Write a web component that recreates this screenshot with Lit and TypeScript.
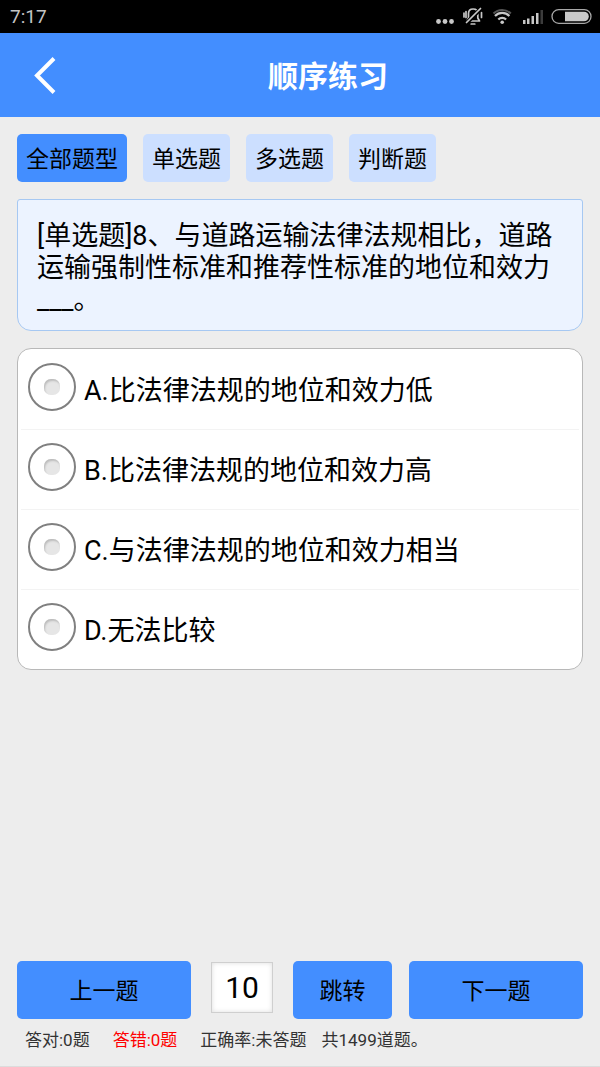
import { LitElement, html, css } from "lit";
import { customElement, state } from "lit/decorators.js";

@customElement("status-bar")
class StatusBar extends LitElement {
  static styles = css`
    :host {
      display: flex;
      align-items: center;
      justify-content: space-between;
      height: 33px;
      padding: 0 8px 0 10px;
      background: #000;
      color: #c4c4c4;
      font-size: 19px;
      line-height: 33px;
    }
    .icons {
      display: block;
    }
  `;

  render() {
    return html`
      <span>7:17</span>
      <svg class="icons" width="160" height="33" viewBox="432 0 160 33" fill="none" stroke="#c8c8c8" aria-hidden="true">
        <g fill="#c8c8c8" stroke="none">
          <circle cx="438.500" cy="21.500" r="2.400" />
          <circle cx="445" cy="21.500" r="2.400" />
          <circle cx="451.500" cy="21.500" r="2.400" />
        </g>
        <g stroke-width="1.700" stroke-linecap="round" stroke-linejoin="round">
          <path d="M467 21h12.500l-1.700-3v-4.500c0-2.600-1.700-4.500-4.700-4.500s-4.600 1.900-4.600 4.500v4.500z" />
          <path d="M471.200 24h3.600M464 13v4M466 11.500v6M481.500 12.500v5" />
          <path stroke="#000" stroke-width="4" d="M467.500 22 480 9.500" />
          <path d="M466.500 22.500 480.500 8.500" />
        </g>
        <g stroke-width="2.200">
          <path stroke="#555" d="M493.500 13.500c4.800-4.700 12.500-4.700 17.300 0" />
          <path d="M495 16c4-4.100 10.400-4.100 14.400 0M498.300 19.500c2.200-2.200 5.600-2.200 7.800 0" />
          <circle cx="502.200" cy="22.300" r="1.800" fill="#c8c8c8" stroke="none" />
        </g>
        <g fill="#c8c8c8" stroke="none">
          <path d="M523 20h2.500v4H523zM527 18.500h2.500V24H527zM531.500 16h2.500v8h-2.500zM536 13h2.500v11H536z" />
          <path fill="#3c3c3c" d="M540.500 10h2.500v14h-2.500z" />
        </g>
        <rect x="552" y="9.700" width="39" height="13.600" rx="6.700" stroke="#a8a8a8" stroke-width="1.300" />
        <path stroke="none" fill="#c8c8c8" d="M565 11.700h19a4.800 4.800 0 0 1 0 9.600h-19z" />
      </svg>
    `;
  }
}

@customElement("app-root")
class AppRoot extends LitElement {
  static styles = css`
    :host {
      display: flex;
      flex-direction: column;
      min-height: 100vh;
      box-sizing: border-box;
      background: #ededed;
      color: #000;
      font-family: Roboto, "Noto Sans CJK SC", sans-serif;
    }
    button,
    input {
      font-family: inherit;
      color: inherit;
      margin: 0;
      box-sizing: border-box;
    }
    button {
      border: 0;
      padding: 0;
      cursor: pointer;
    }
    .header {
      display: grid;
      grid-template-columns: 56px 1fr;
      align-items: center;
      height: 84px;
      background: #438eff;
      color: #fff;
    }
    .back {
      display: flex;
      align-items: center;
      justify-content: flex-end;
      height: 84px;
      background: none;
    }
    .title {
      margin: 0;
      padding-top: 4px;
      text-align: center;
      font-size: 30px;
      line-height: 40px;
      font-weight: 700;
    }
    .tabs {
      display: flex;
      gap: 16px;
      padding: 17px 17px 0;
    }
    .tab {
      height: 48px;
      padding: 4px 9px 0;
      border-radius: 5px;
      background: #ccdfff;
      font-size: 23px;
      line-height: 28px;
    }
    .tab.active {
      background: #438eff;
    }
    .question {
      margin: 17px 17px 0;
      padding: 20px 19px 14px;
      border: 1px solid #a6c8f2;
      border-radius: 3px 3px 14px 14px;
      background: #ecf3ff;
      font-size: 27px;
      line-height: 32px;
      overflow-wrap: anywhere;
    }
    .question p {
      margin: 0;
    }
    .options {
      margin: 17px 17px 0;
      padding: 0;
      border: 1px solid #b8b8b8;
      border-radius: 14px;
      background: #fff;
    }
    .option {
      display: flex;
      align-items: center;
      gap: 8px;
      min-height: 80px;
      margin: 0 3px;
      padding: 0 7px;
      box-sizing: border-box;
      border-top: 1px solid #f3f3f3;
      font-size: 27px;
      line-height: 36px;
      cursor: pointer;
    }
    .option:first-of-type {
      border-top-color: transparent;
    }
    .text {
      padding-top: 2px;
    }
    .radio {
      appearance: none;
      flex: none;
      display: grid;
      place-items: center;
      width: 48px;
      height: 48px;
      margin-bottom: 6px;
      border: 2px solid #808080;
      border-radius: 50%;
      background: #fff;
    }
    .radio::before {
      content: "";
      width: 16px;
      height: 16px;
      border-radius: 7px;
      background: #e6e6e6;
      box-shadow: inset 1px 2px 2px #bdbdbd;
    }
    .radio:checked::before {
      background: #438eff;
    }
    .footer {
      margin-top: auto;
      padding: 17px 17px 14px;
      border-bottom: 1px solid #dcdcdc;
    }
    .pager {
      display: grid;
      grid-template-columns: 1fr 68px 99px 1fr;
      column-gap: 17px;
    }
    .btn {
      height: 58px;
      padding-top: 4px;
      border-radius: 5px;
      background: #438eff;
      font-size: 23px;
      line-height: 28px;
    }
    .page {
      width: 62px;
      height: 51px;
      margin: 1px 3px 0;
      padding: 0;
      border: 1px solid #cfcfcf;
      border-radius: 0;
      background: #fff;
      box-shadow: inset 0 0 5px #dedede;
      text-align: center;
      font-size: 30px;
    }
    .stats {
      display: flex;
      flex-wrap: wrap;
      margin-top: 9px;
      padding: 0 8px;
      color: #333;
      font-size: 17px;
      line-height: 24px;
    }
    .correct,
    .wrong {
      margin-right: 23px;
    }
    .wrong {
      color: #f00;
    }
    .rate {
      margin-right: 15px;
    }
  `;

  @state() private tab = "全部题型";
  @state() private page = "10";

  private tabs = ["全部题型", "单选题", "多选题", "判断题"];
  private options = [
    "A.比法律法规的地位和效力低",
    "B.比法律法规的地位和效力高",
    "C.与法律法规的地位和效力相当",
    "D.无法比较",
  ];

  private step(delta: number) {
    this.page = String(Math.max(1, Number(this.page) + delta));
  }

  render() {
    return html`
      <status-bar></status-bar>
      <header class="header">
        <button class="back" aria-label="返回">
          <svg width="22" height="38" viewBox="0 0 22 38" fill="none" stroke="#fff" stroke-width="4">
            <path d="M20 2.500 3 19.500 20 36.500" />
          </svg>
        </button>
        <h1 class="title">顺序练习</h1>
      </header>
      <nav class="tabs">
        ${this.tabs.map(
          (t) => html`<button
            class="tab ${t === this.tab ? "active" : ""}"
            aria-pressed=${t === this.tab}
            @click=${() => (this.tab = t)}
          >${t}</button>`
        )}
      </nav>
      <section class="question">
        <p>[单选题]8、与道路运输法律法规相比，道路运输强制性标准和推荐性标准的地位和效力___。</p>
      </section>
      <div class="options" role="radiogroup">
        ${this.options.map(
          (o, i) => html`<label class="option" for="option-${i}">
            <input class="radio" type="radio" name="answer" id="option-${i}" />
            <span class="text">${o}</span>
          </label>`
        )}
      </div>
      <footer class="footer">
        <div class="pager">
          <button class="btn" @click=${() => this.step(-1)}>上一题</button>
          <input
            class="page"
            type="text"
            inputmode="numeric"
            aria-label="题号"
            .value=${this.page}
            @change=${(e: Event) => (this.page = (e.target as HTMLInputElement).value)}
          />
          <button class="btn">跳转</button>
          <button class="btn" @click=${() => this.step(1)}>下一题</button>
        </div>
        <div class="stats">
          <span class="correct">答对:0题</span>
          <span class="wrong">答错:0题</span>
          <span class="rate">正确率:未答题</span>
          <span>共1499道题。</span>
        </div>
      </footer>
    `;
  }
}
